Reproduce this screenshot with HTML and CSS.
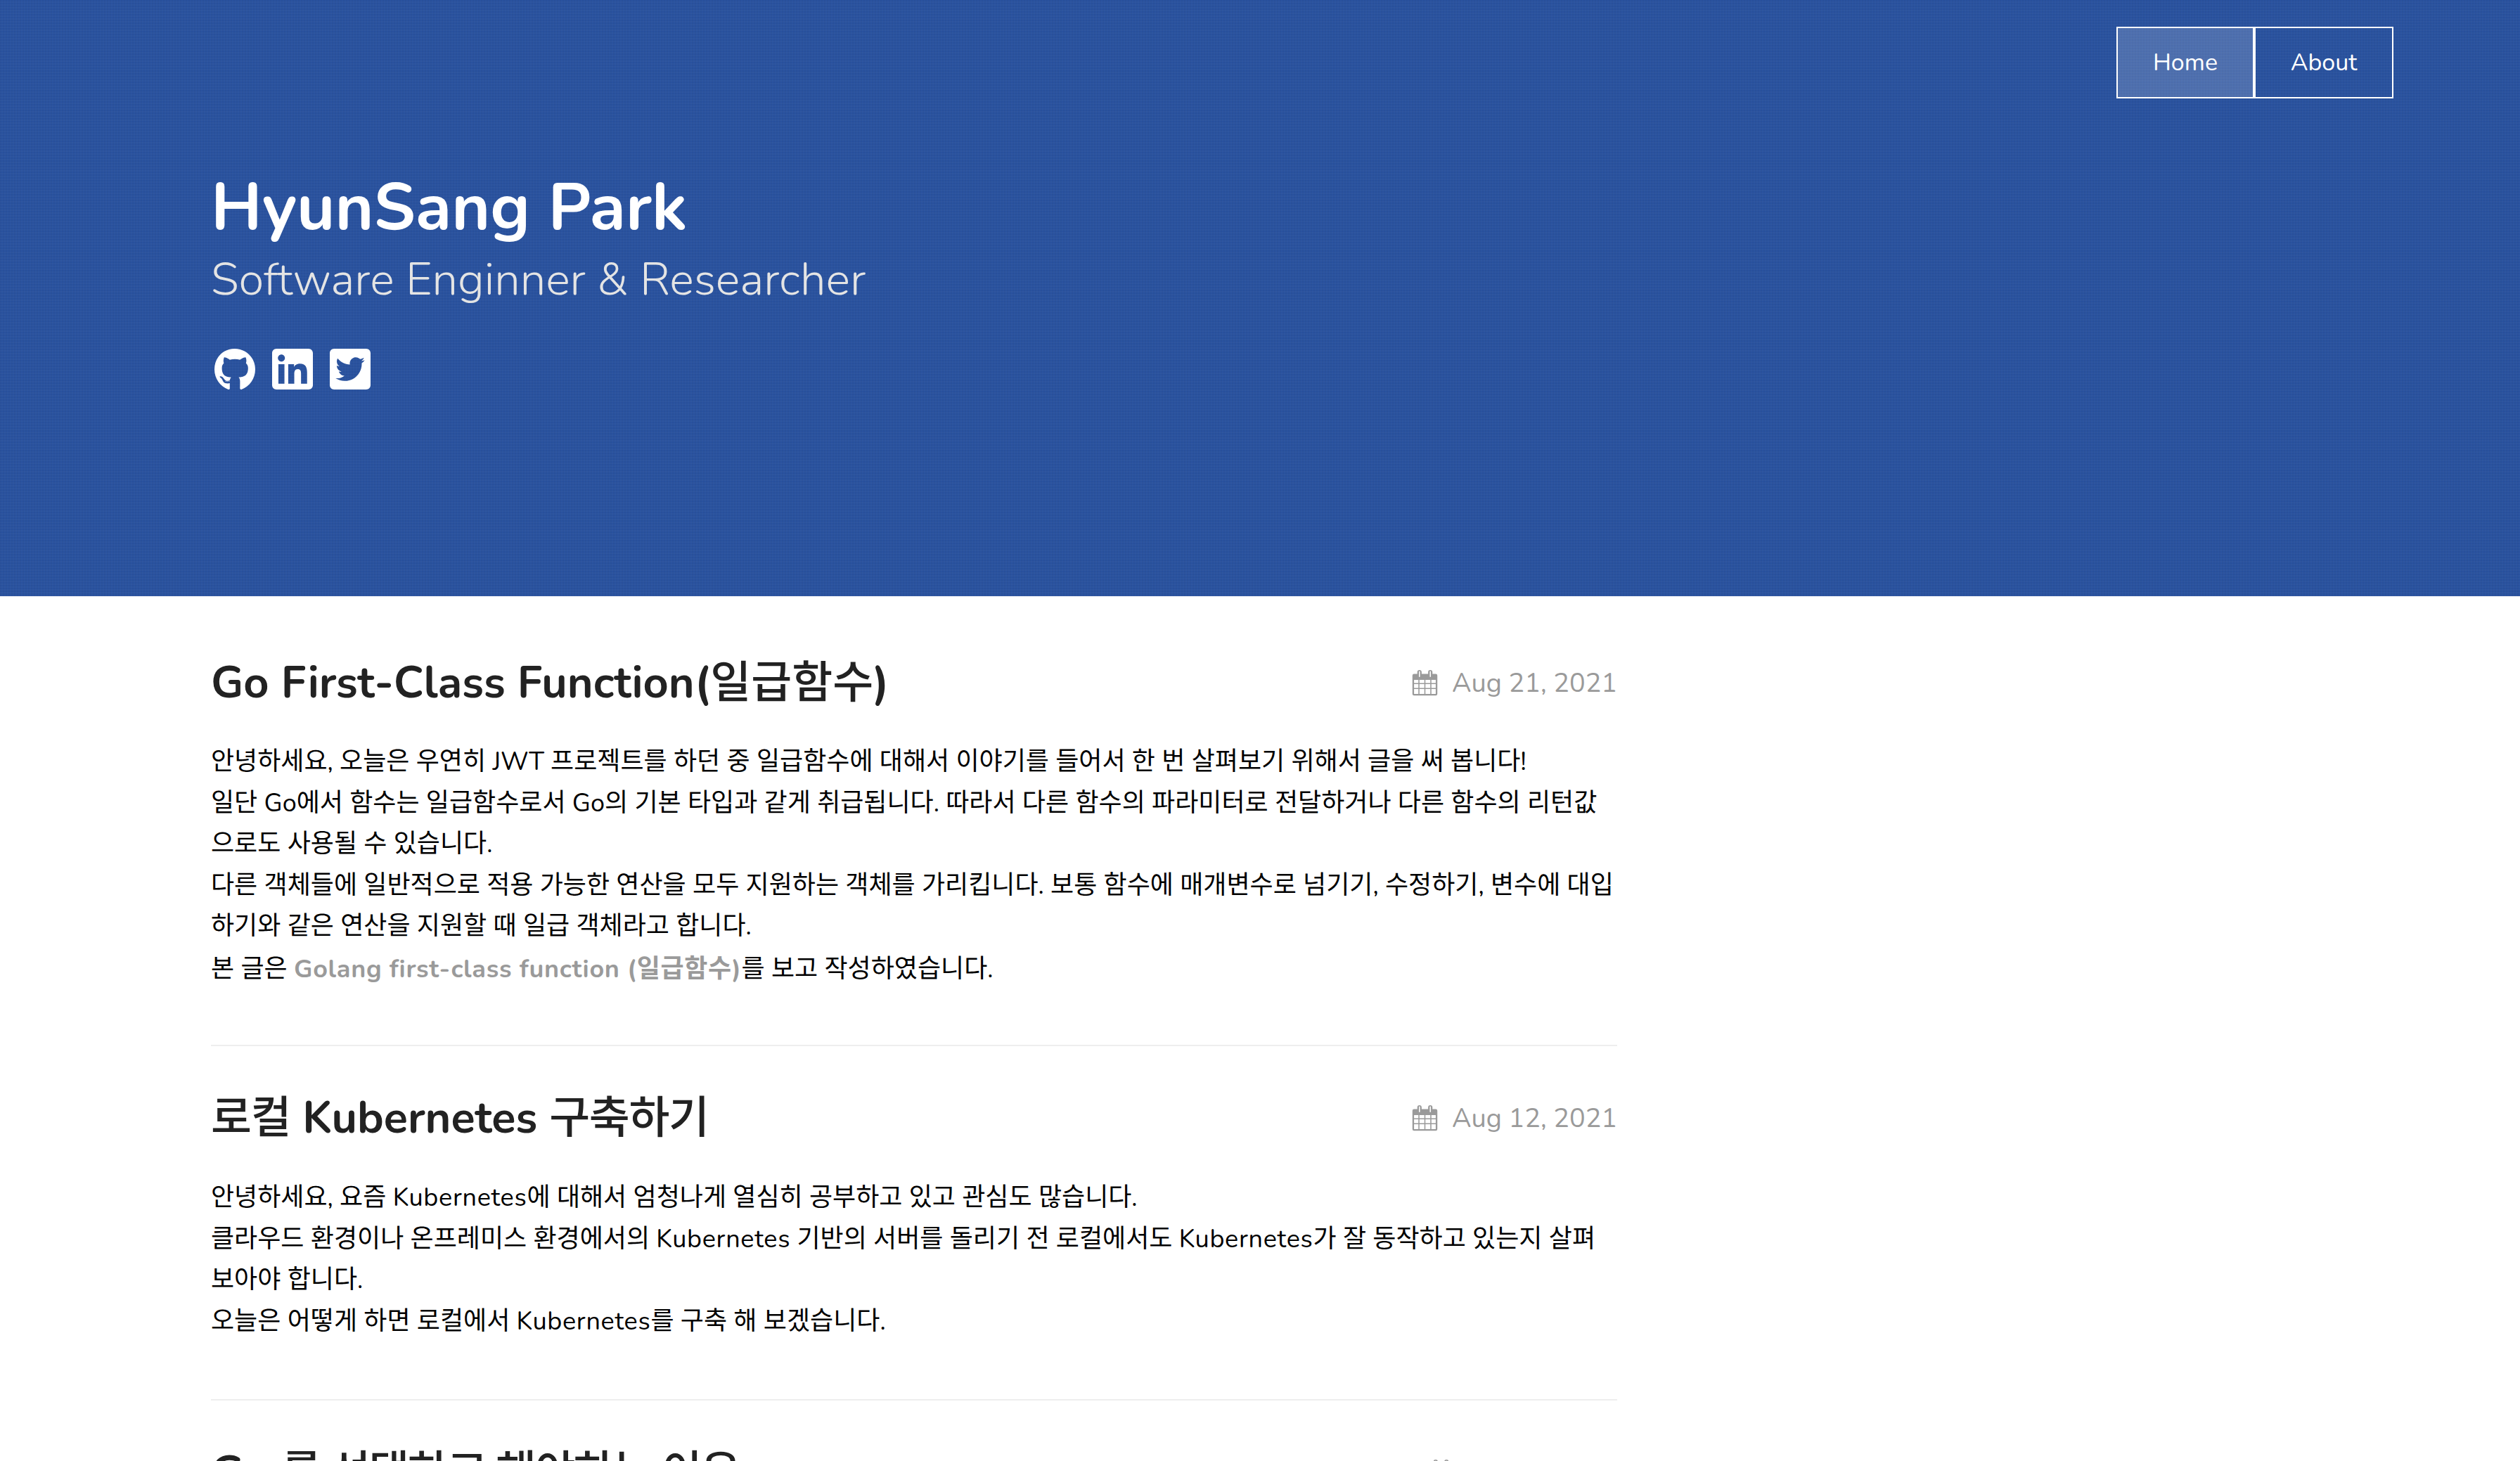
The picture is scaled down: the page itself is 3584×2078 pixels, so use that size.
FILE: index.html
```html
<!DOCTYPE html>
<html lang="ko">
<head>
<meta charset="utf-8">
<title>HyunSang Park</title>
<link rel="stylesheet" href="styles.css">
</head>
<body>
<header class="hero">
  <nav class="nav">
    <a class="nav-item active">Home</a>
    <a class="nav-item">About</a>
  </nav>
  <div class="hero-text">
    <h1 class="site-title">HyunSang Park</h1>
    <p class="site-sub">Software Enginner &amp; Researcher</p>
    <div class="social">
      <svg class="soc" viewBox="0 8 496 484" preserveAspectRatio="none"><path fill="#fff" d="M165.900 397.400c0 2-2.300 3.600-5.200 3.600-3.300.3-5.600-1.300-5.600-3.600 0-2 2.300-3.600 5.200-3.600 3-.3 5.600 1.300 5.600 3.600zm-31.100-4.500c-.7 2 1.300 4.300 4.300 4.900 2.600 1 5.600 0 6.200-2s-1.300-4.300-4.300-5.200c-2.600-.7-5.500.3-6.200 2.300zm44.200-1.700c-2.900.7-4.900 2.600-4.600 4.900.3 2 2.900 3.300 5.900 2.600 2.900-.7 4.900-2.600 4.600-4.600-.3-1.900-3-3.200-5.900-2.900zM244.800 8C106.100 8 0 113.300 0 252c0 110.900 69.800 205.800 169.500 239.200 12.800 2.300 17.300-5.600 17.300-12.100 0-6.200-.3-40.400-.3-61.400 0 0-70 15-84.700-29.800 0 0-11.400-29.100-27.800-36.600 0 0-22.900-15.700 1.600-15.400 0 0 24.900 2 38.600 25.800 21.900 38.600 58.600 27.500 72.900 20.900 2.300-16 8.800-27.100 16-33.700-55.900-6.200-112.300-14.300-112.300-110.500 0-27.500 7.600-41.300 23.600-58.900-2.600-6.500-11.100-33.300 2.600-67.900 20.900-6.500 69 27 69 27 20-5.600 41.500-8.500 62.800-8.500s42.800 2.900 62.800 8.500c0 0 48.100-33.600 69-27 13.700 34.700 5.200 61.400 2.600 67.900 16 17.700 25.800 31.500 25.800 58.900 0 96.500-58.900 104.200-114.800 110.500 9.200 7.900 17 22.900 17 46.400 0 33.700-.3 75.400-.3 83.600 0 6.500 4.600 14.400 17.300 12.100C428.200 457.800 496 362.900 496 252 496 113.300 383.500 8 244.800 8z"/></svg>
      <svg class="soc" viewBox="0 32 448 448"><path fill="#fff" d="M400 32H48C21.500 32 0 53.500 0 80v352c0 26.500 21.500 48 48 48h352c26.500 0 48-21.500 48-48V80c0-26.500-21.500-48-48-48zM135.400 416H69V202.200h66.500V416zm-33.200-243c-21.300 0-38.500-17.300-38.500-38.500S80.900 96 102.200 96c21.200 0 38.500 17.300 38.500 38.500 0 21.300-17.200 38.500-38.500 38.500zm282.100 243h-66.400V312c0-24.800-.5-56.700-34.500-56.700-34.600 0-39.900 27-39.900 54.900V416h-66.400V202.200h63.700v29.200h.9c8.900-16.800 30.600-34.500 62.900-34.500 67.200 0 79.700 44.300 79.700 101.900V416z"/></svg>
      <svg class="soc" viewBox="0 32 448 448"><path fill="#fff" d="M400 32H48C21.500 32 0 53.500 0 80v352c0 26.500 21.500 48 48 48h352c26.500 0 48-21.500 48-48V80c0-26.500-21.500-48-48-48zm-48.900 158.800c.2 2.800.2 5.700.2 8.500 0 86.700-66 186.600-186.600 186.600-37.200 0-71.700-10.800-100.700-29.400 5.300.6 10.400.8 15.800.8 30.700 0 58.900-10.400 81.400-28-28.800-.6-53-19.500-61.300-45.500 10.100 1.500 19.200 1.500 29.600-1.200-30-6.100-52.500-32.500-52.500-64.400v-.8c8.700 4.900 18.900 7.900 29.600 8.300a65.447 65.447 0 0 1-29.200-54.600c0-12.200 3.200-23.400 8.900-33.100 32.300 39.800 80.800 65.800 135.200 68.600-9.300-44.500 24-80.600 64-80.600 18.900 0 35.900 7.900 47.900 20.700 14.800-2.800 29-8.300 41.600-15.800-4.900 15.200-15.100 28-28.800 36 13.200-1.400 26-5.100 37.800-10.200-8.900 13.100-20.100 24.700-32.900 34z"/></svg>
    </div>
  </div>
</header>
<main class="posts">
  <article class="post">
    <div class="post-head">
      <h2 class="post-title">Go First-Class Function(<span class="ko">일급함수</span>)</h2>
      <span class="post-date"><svg class="cal" viewBox="0 0 48 48"><use href="#cal"/></svg>Aug 21, 2021</span>
    </div>
    <p class="post-body">안녕하세요, 오늘은 우연히 JWT 프로젝트를 하던 중 일급함수에 대해서 이야기를 들어서 한 번 살펴보기 위해서 글을 써 봅니다!<br>일단 Go에서 함수는 일급함수로서 Go의 기본 타입과 같게 취급됩니다. 따라서 다른 함수의 파라미터로 전달하거나 다른 함수의 리턴값으로도 사용될 수 있습니다.<br>다른 객체들에 일반적으로 적용 가능한 연산을 모두 지원하는 객체를 가리킵니다. 보통 함수에 매개변수로 넘기기, 수정하기, 변수에 대입하기와 같은 연산을 지원할 때 일급 객체라고 합니다.</p>
    <p class="post-body note">본 글은 <a class="ref">Golang first-class function (일급함수)</a>를 보고 작성하였습니다.</p>
  </article>
  <article class="post">
    <div class="post-head">
      <h2 class="post-title"><span class="ko tight">로컬</span> Kubernetes <span class="ko tight">구축하기</span></h2>
      <span class="post-date"><svg class="cal" viewBox="0 0 48 48"><use href="#cal"/></svg>Aug 12, 2021</span>
    </div>
    <p class="post-body">안녕하세요, 요즘 <span class="lat">Kubernetes</span>에 대해서 엄청나게 열심히 공부하고 있고 관심도 많습니다.<br>클라우드 환경이나 온프레미스 환경에서의 <span class="lat">Kubernetes</span> 기반의 서버를 돌리기 전 로컬에서도 <span class="lat">Kubernetes</span>가 잘 동작하고 있는지 살펴보아야 합니다.<br>오늘은 어떻게 하면 로컬에서 <span class="lat">Kubernetes</span>를 구축 해 보겠습니다.</p>
  </article>
  <article class="post">
    <div class="post-head">
      <h2 class="post-title">Go <span class="ko tighter">를 선택하고 해야하는 이유</span></h2>
      <span class="post-date"><svg class="cal" viewBox="0 0 48 48"><use href="#cal"/></svg>Aug 1, 2021</span>
    </div>
  </article>
</main>
<svg class="defs" width="0" height="0">
  <symbol id="cal" viewBox="0 0 48 48">
    <path fill="#9a9a9a" fill-rule="evenodd" d="M10 4a4 4 0 0 1 8 0v3h12V4a4 4 0 0 1 8 0v3h6a3 3 0 0 1 3 3v34a3 3 0 0 1-3 3H4a3 3 0 0 1-3-3V10a3 3 0 0 1 3-3h6zM13 3v9a1 1 0 0 0 2 0V3a1 1 0 0 0-2 0zM33 3v9a1 1 0 0 0 2 0V3a1 1 0 0 0-2 0zM4 18v6h8v-6zm10 0v6h9v-6zm11 0v6h9v-6zm11 0v6h8v-6zM4 26v7h8v-7zm10 0v7h9v-7zm11 0v7h9v-7zm11 0v7h8v-7zM4 35v9h8v-9zm10 0v9h9v-9zm11 0v9h9v-9zm11 0v9h8v-9z"/>
  </symbol>
</svg>
</body>
</html>
```
FILE: styles.css
```css
* { box-sizing: border-box; }
html, body { margin: 0; padding: 0; }
body {
  background: #fff;
  color: #000;
  font-family: "Nunito", "Lato", "Noto Sans CJK KR", sans-serif;
}
.hero {
  height: 848px;
  background-color: #29529f;
  background-image:
    repeating-linear-gradient(0deg, rgba(255,255,255,.025) 0 2px, transparent 2px 4px),
    repeating-linear-gradient(90deg, rgba(0,0,0,.03) 0 2px, transparent 2px 4px);
  padding: 38px 180px 0 300px;
  color: #fff;
}
.nav {
  display: flex;
  justify-content: flex-end;
}
.nav-item {
  width: 198px;
  height: 102px;
  border: 2px solid #fff;
  display: flex;
  align-items: center;
  justify-content: center;
  font-size: 34px;
  color: #fff;
}
.nav-item.active { width: 196px; background: rgba(255,255,255,.17); }
.hero-text { margin-top: 95px; }
.site-title {
  margin: 0;
  font-size: 94px;
  line-height: 120px;
  font-weight: 700;
}
.site-sub {
  margin: 3px 0 0;
  font-size: 65.200px;
  line-height: 80px;
  font-weight: 300;
  color: #e4e4e4;
}
.social { display: flex; gap: 24px; margin: 58px 0 0 5px; }
.soc { width: 58px; height: 58px; display: block; }
.posts { width: 2000px; margin-left: 300px; }
.post { padding: 62px 0 78px; border-bottom: 2px solid #eee; }
.post:first-child { padding-top: 83px; }
.post:last-child { border-bottom: 0; }
.post + .post { padding-bottom: 81px; }
.post-head { display: flex; justify-content: space-between; align-items: center; margin-bottom: 44px; }
.post + .post .post-head { margin-bottom: 45px; }
.post-title {
  margin: 0;
  font-size: 63px;
  line-height: 80px;
  font-weight: 700;
  color: #222;
}
.ko { font-weight: 500; }
.ko.tight { letter-spacing: -1.400px; }
.ko.tighter { letter-spacing: -2.500px; }
.post-date { display: flex; align-items: center; font-size: 37.800px; color: #9a9a9a; }
.cal { width: 37px; height: 37px; margin-right: 20px; }
.post-body {
  margin: 0;
  font-size: 36px;
  line-height: 58.500px;
  color: #000;
}
.post-body.note { margin-top: 2px; }
.lat { letter-spacing: .7px; }
.ref { color: #9a9a9a; font-weight: 700; letter-spacing: .7px; }
.defs { position: absolute; }
```
